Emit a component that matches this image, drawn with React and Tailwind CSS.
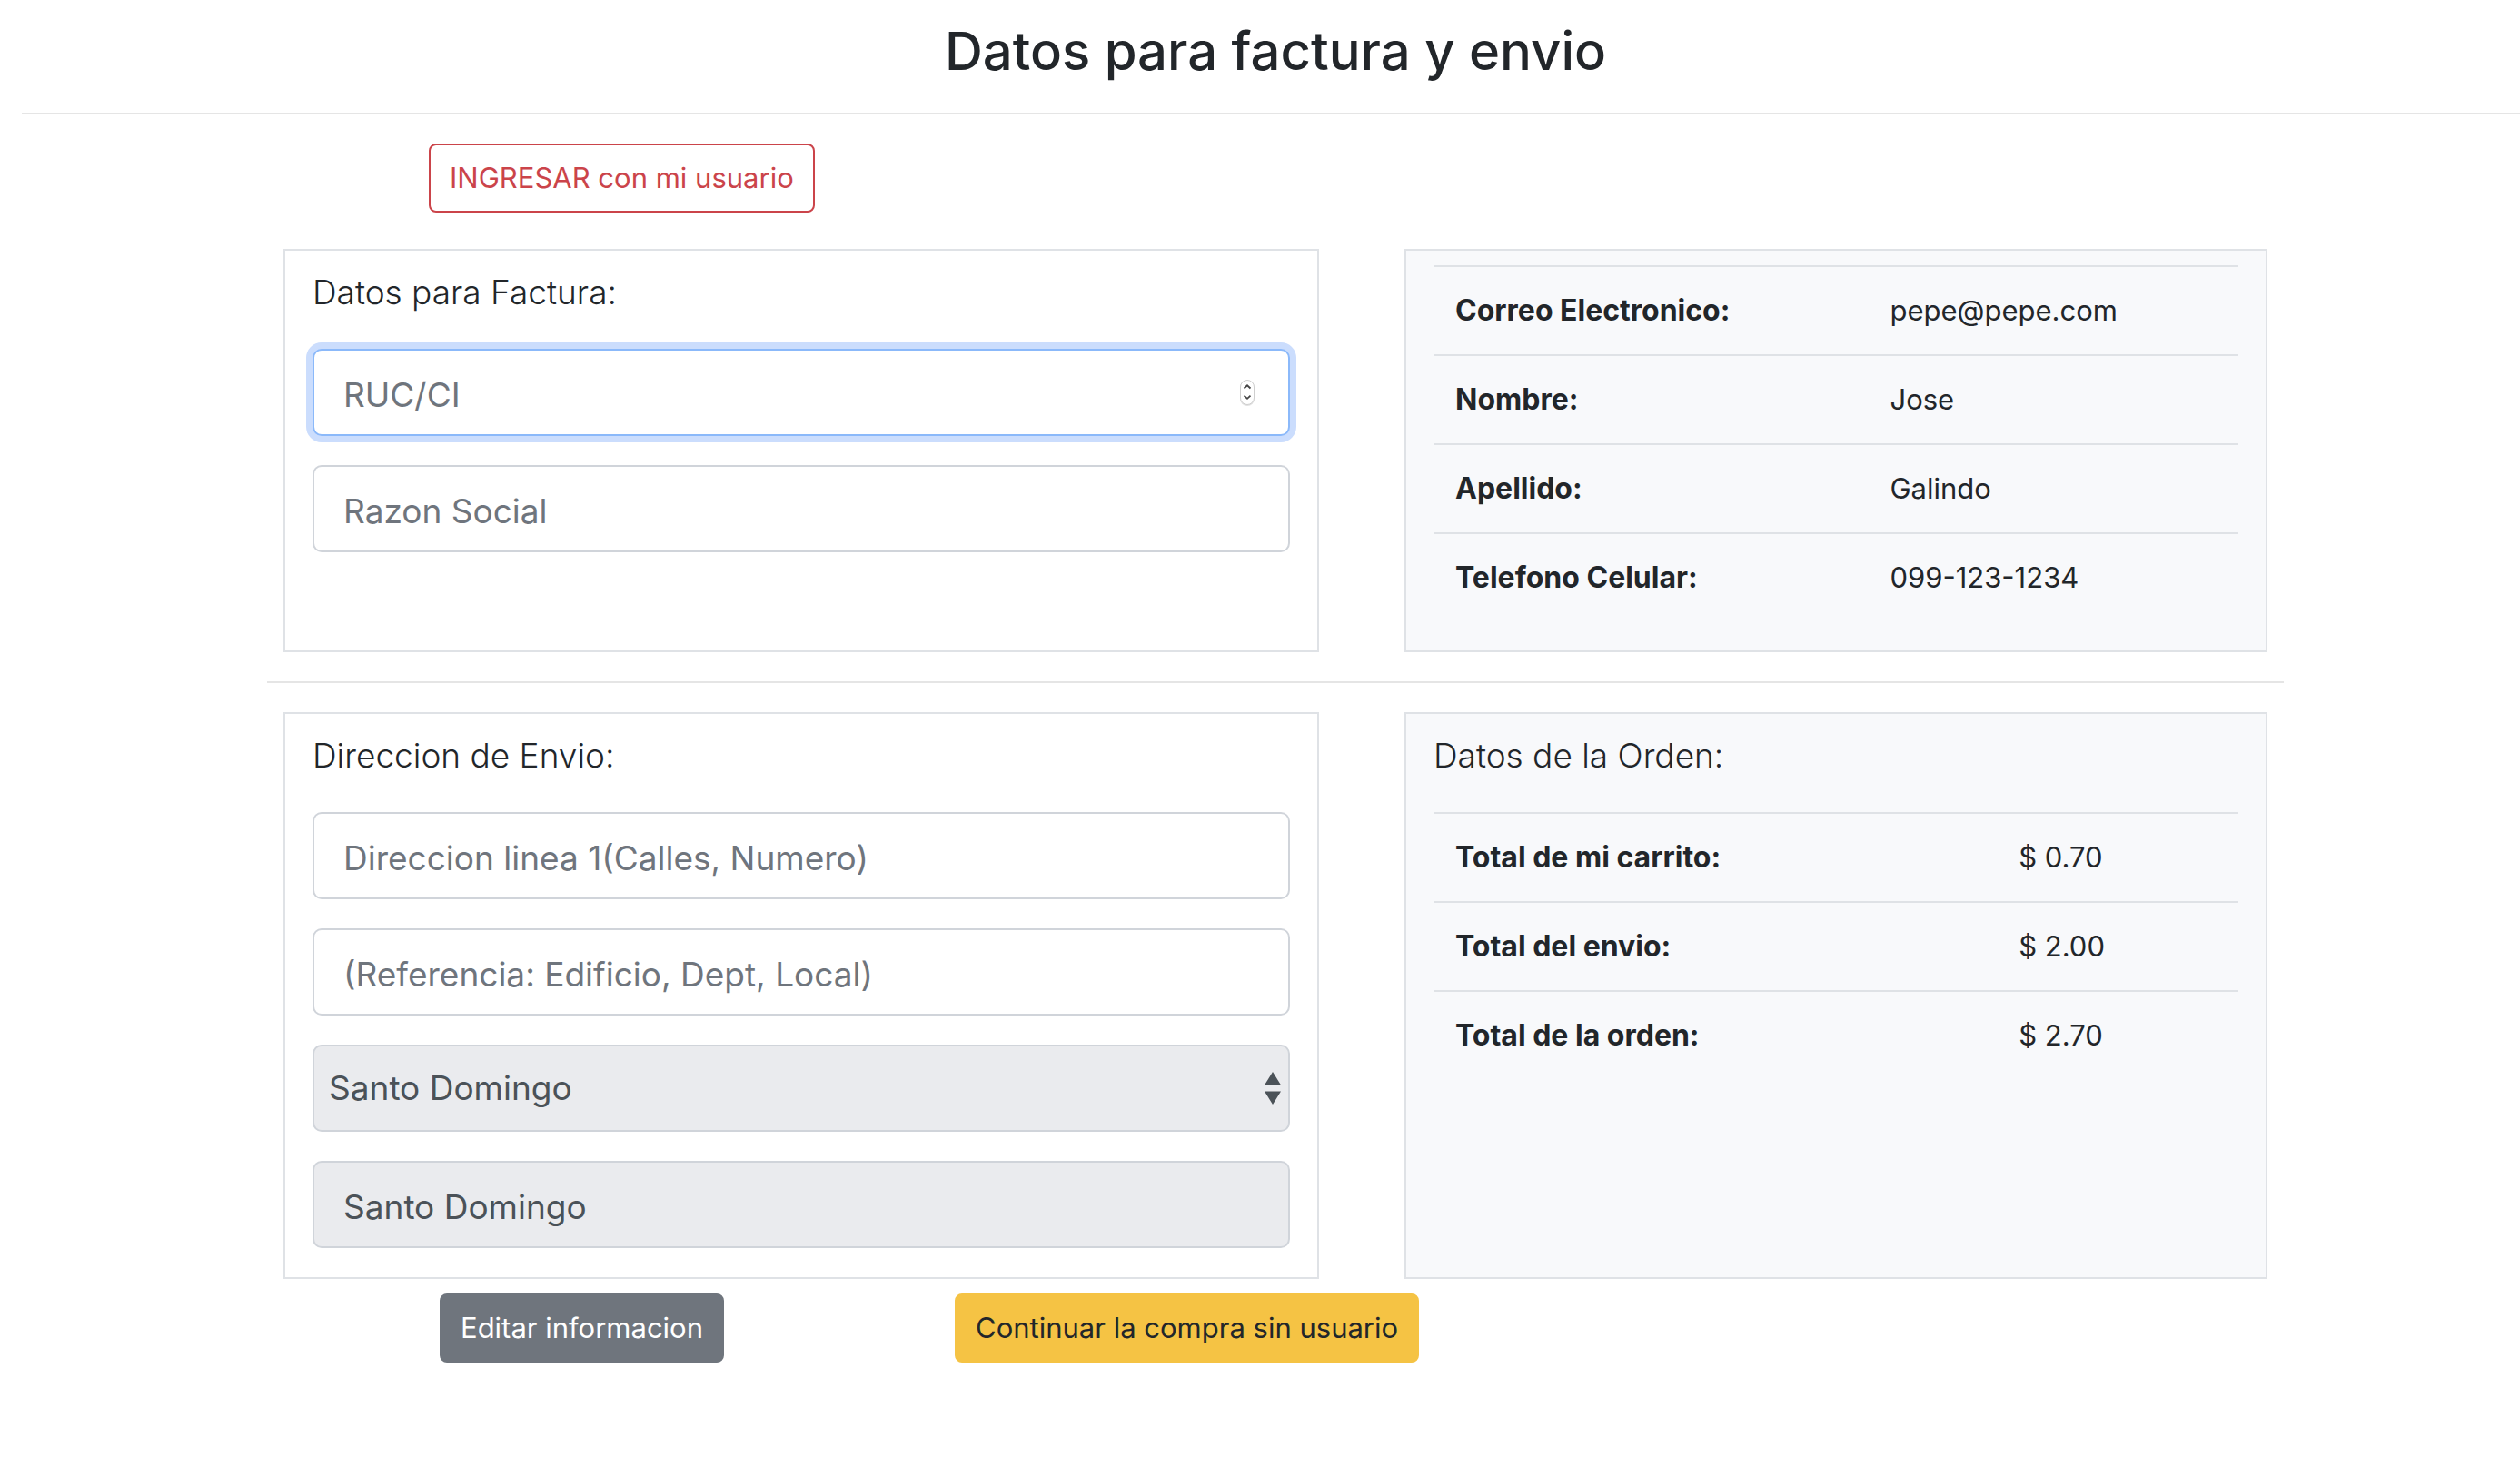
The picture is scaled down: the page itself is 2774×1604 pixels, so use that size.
const field =
  "block h-24 w-full rounded-[10px] border-2 px-8 pt-1 text-[37px] leading-[48px] outline-none placeholder:text-[#6f757d] placeholder:opacity-100";
const plainField = `${field} border-[#d0d4da] bg-white text-[#4b5258]`;
const focusedField = `${field} border-[#8bb9fa] bg-white text-[#4b5258] ring-7 ring-[#cbddfd] [appearance:textfield] [&::-webkit-inner-spin-button]:appearance-none`;
const disabledField = `${field} border-[#d0d4da] bg-[#eaebee] text-[#4b5258]`;

const button = "h-[76px] rounded-lg border-2 px-[21px] text-[31px] leading-[48px] whitespace-nowrap";

const customer = [
  ["Correo Electronico:", "pepe@pepe.com"],
  ["Nombre:", "Jose"],
  ["Apellido:", "Galindo"],
  ["Telefono Celular:", "099-123-1234"],
];

const totals = [
  ["Total de mi carrito:", "$ 0.70"],
  ["Total del envio:", "$ 2.00"],
  ["Total de la orden:", "$ 2.70"],
];

function Panel({ className = "", children }) {
  return <section className={`border-2 border-[#dfe2e6] px-[30px] pb-8 ${className}`}>{children}</section>;
}

function PanelTitle({ children }) {
  return <h2 className="mb-9 text-[37px] leading-[52px] font-light">{children}</h2>;
}

function DataTable({ rows, label, labelWidth }) {
  return (
    <table aria-label={label} className="w-full table-fixed border-separate border-spacing-0 text-left text-[31px] leading-[48px]">
      <tbody>
        {rows.map(([name, value]) => (
          <tr key={name}>
            <th scope="row" className={`${labelWidth} border-t-2 border-[#dfe2e6] p-6 text-[32px] font-bold whitespace-nowrap`}>
              {name}
            </th>
            <td className="border-t-2 border-[#dfe2e6] p-6 whitespace-nowrap">{value}</td>
          </tr>
        ))}
      </tbody>
    </table>
  );
}

function Stepper() {
  return (
    <svg aria-hidden="true" viewBox="0 0 20 34" className="pointer-events-none absolute top-8 right-[37px] h-[34px] w-5">
      <rect x="2" y="3" width="16" height="28" rx="8" fill="#000" opacity="0.12" />
      <rect x="2.5" y="2.5" width="15" height="27" rx="7.5" fill="#fff" stroke="#cfcfcf" />
      <path d="M6.5 11.5 10 8.3l3.5 3.2M6.5 19.7 10 22.9l3.5-3.2" fill="none" stroke="#444" strokeWidth="1.8" />
    </svg>
  );
}

function SelectArrows() {
  return (
    <svg aria-hidden="true" viewBox="0 0 18 36" className="pointer-events-none absolute top-[30px] right-[10px] h-9 w-[18px]">
      <path d="M9 0 18 14.5H0zM0 21.5h18L9 36z" fill="#4b5258" />
    </svg>
  );
}

export default function App() {
  return (
    <div className="min-h-screen overflow-x-hidden bg-white pl-6 font-['Inter','Liberation_Sans',sans-serif] text-[#22262a]">
      <main className="-mr-[10px] pt-[18px]">
        <h1 className="text-center text-[58px] leading-[76px] font-medium">Datos para factura y envio</h1>
        <hr className="mt-[30px] border-t-2 border-[#e5e5e5]" />

        <div className="mx-auto mt-8 max-w-[2220px]">
          <div className="pl-[178px]">
            <button type="button" className={`${button} border-[#cb444a] bg-white text-[#cb444a]`}>
              INGRESAR con mi usuario
            </button>
          </div>

          <div className="mt-10 grid grid-cols-[1140fr_950fr] gap-[94px] px-[18px]">
            <Panel className="pt-5">
              <PanelTitle>Datos para Factura:</PanelTitle>
              <div className="flex flex-col gap-8">
                <div className="relative">
                  <input type="number" aria-label="RUC/CI" placeholder="RUC/CI" className={focusedField} />
                  <Stepper />
                </div>
                <input type="text" aria-label="Razon Social" placeholder="Razon Social" className={plainField} />
              </div>
            </Panel>
            <Panel className="bg-[#f8f9fb] pt-4">
              <DataTable rows={customer} label="Datos del cliente" labelWidth="w-[54%]" />
            </Panel>
          </div>

          <hr className="my-8 border-t-2 border-[#e5e5e5]" />

          <div className="grid grid-cols-[1140fr_950fr] gap-[94px] px-[18px]">
            <Panel className="pt-5">
              <PanelTitle>Direccion de Envio:</PanelTitle>
              <div className="flex flex-col gap-8">
                <input
                  type="text"
                  aria-label="Direccion linea 1"
                  placeholder="Direccion linea 1(Calles, Numero)"
                  className={plainField}
                />
                <input
                  type="text"
                  aria-label="Referencia"
                  placeholder="(Referencia: Edificio, Dept, Local)"
                  className={plainField}
                />
                <div className="relative">
                  <select
                    disabled
                    aria-label="Provincia"
                    className="block h-24 w-full appearance-none rounded-[10px] border-2 border-[#d0d4da] bg-[#eaebee] px-4 text-[37px] leading-[48px] text-[#4b5258] opacity-100"
                  >
                    <option>Santo Domingo</option>
                  </select>
                  <SelectArrows />
                </div>
                <input type="text" aria-label="Ciudad" disabled defaultValue="Santo Domingo" className={disabledField} />
              </div>
            </Panel>
            <Panel className="bg-[#f8f9fb] pt-5">
              <PanelTitle>Datos de la Orden:</PanelTitle>
              <DataTable rows={totals} label="Datos de la Orden" labelWidth="w-[70%]" />
            </Panel>
          </div>

          <div className="mt-4 flex gap-[254px] pl-[190px]">
            <button type="button" className={`${button} border-[#6f757d] bg-[#6f757d] text-white`}>
              Editar informacion
            </button>
            <button type="button" className={`${button} border-[#f5c344] bg-[#f5c344]`}>
              Continuar la compra sin usuario
            </button>
          </div>
        </div>
      </main>
    </div>
  );
}
